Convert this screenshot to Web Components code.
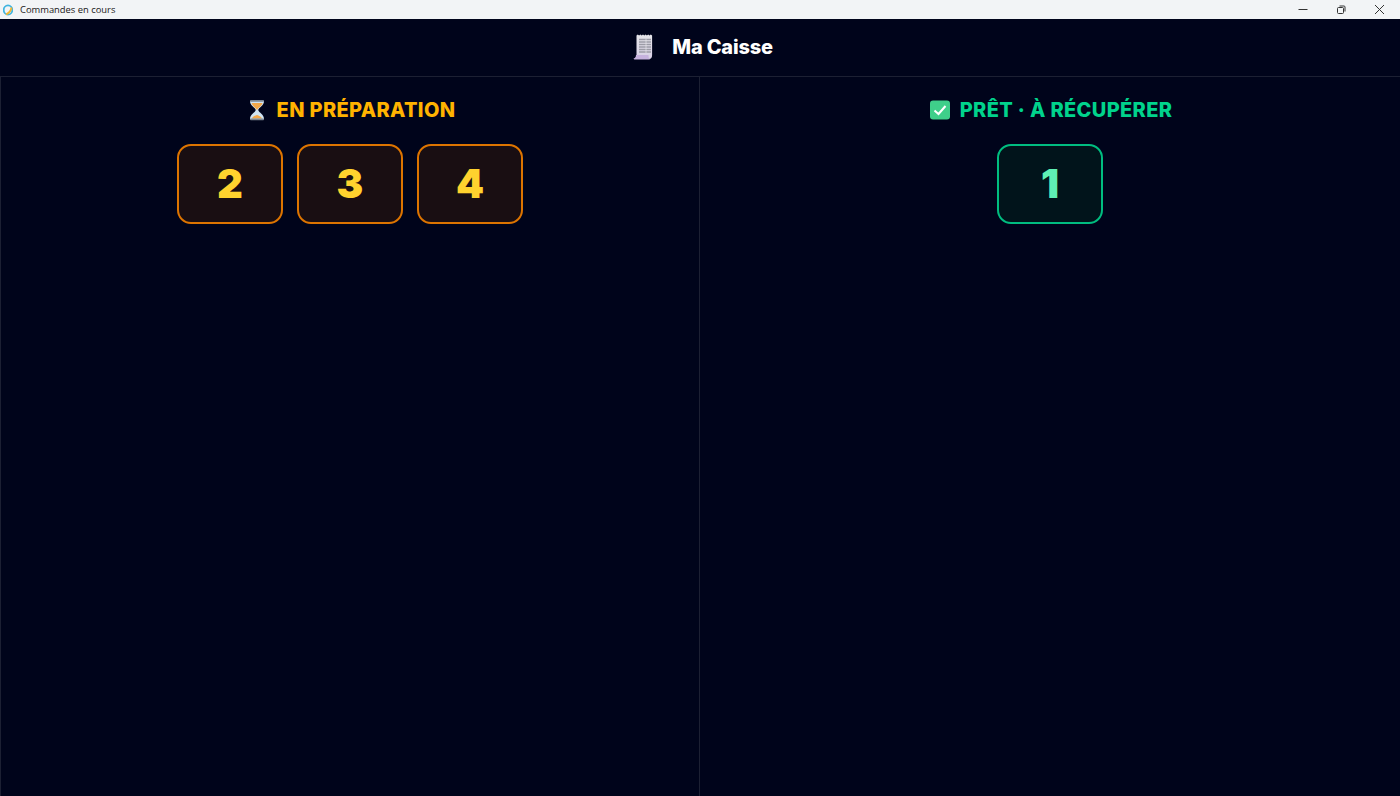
<!doctype html>
<html lang="fr"><head><meta charset="utf-8"><title>Commandes en cours</title>
<style>
html,body{margin:0;height:100%;background:#00041b}
body{width:1400px;height:796px;overflow:hidden;font-family:Inter,"Liberation Sans",sans-serif}
</style></head><body>
<caisse-app></caisse-app>
<script>
class WinBar extends HTMLElement{constructor(){super();this.attachShadow({mode:'open'}).innerHTML=`
<style>:host{display:flex;align-items:center;height:19px;background:#f2f4f6;color:#1a1a1a;font:400 9.4px "Open Sans","Liberation Sans",sans-serif}
.ic{display:flex;margin:0 7px 0 3px}.t{flex:1;white-space:nowrap}.b{display:flex;width:38px;justify-content:center;align-items:center;height:19px}
</style>
<span class="ic"><svg width="10" height="12" viewBox="0 0 10 12"><ellipse cx="5" cy="6" rx="4.300" ry="4.600" fill="none" stroke="#3fb4e0" stroke-width="1.800"/><path d="M3 10.500C6 9 8 7 8.500 3.500" fill="none" stroke="#f2b632" stroke-width="1.800"/></svg></span>
<span class="t">Commandes en cours</span>
<span class="b"><svg width="10" height="10"><path d="M.5 4.500h9" stroke="#333" stroke-width="1"/></svg></span>
<span class="b"><svg width="10" height="10"><rect x="1.500" y="2.500" width="6" height="6" rx="1" fill="none" stroke="#333"/><path d="M3.500 1h4.500a1 1 0 0 1 1 1v4.500" fill="none" stroke="#333"/></svg></span>
<span class="b" style="margin-right:2px"><svg width="11" height="11"><path d="M1 1l9 9M10 1l-9 9" stroke="#333" stroke-width="1"/></svg></span>`}}
customElements.define('win-bar',WinBar);

class AppHeader extends HTMLElement{constructor(){super();this.attachShadow({mode:'open'}).innerHTML=`
<style>:host{display:flex;align-items:center;justify-content:center;gap:17px;height:58px;box-sizing:border-box;border-bottom:1px solid #1c2033;color:#fff;font-weight:800;font-size:20px;letter-spacing:-.2px;padding-left:6px;padding-bottom:1px}
svg{display:block}</style>
<svg width="22" height="26" viewBox="0 0 22 26"><defs><linearGradient id="p" x1="0" y1="0" x2="0" y2="1"><stop offset="0" stop-color="#e6e6ea"/><stop offset="1" stop-color="#d8d0e6"/></linearGradient></defs>
<path d="M3.500 1.500l1.300-1 1.300 1 1.300-1 1.300 1 1.300-1 1.300 1 1.300-1 1.300 1 1.300-1 1.300 1 1.300-1 1.300 1V21c0 2.500-1 4-3 4H1c1.500-.7 2.500-2 2.500-4z" fill="url(#p)"/>
<path d="M.5 24.500c1.500 0 2.500-1.200 2.500-3.500h12.500c0 2 .3 3.500 1.500 4.500H2C1.200 25.500.7 25 .5 24.500z" fill="#c6b2de"/>
<path d="M6 5.500h12M6 8h12M6 10.500h12M6 13h12M6 15.500h12M6 18h12" stroke="#9c9ca6" stroke-width="1.300"/><path d="M13 4.500v14.500" stroke="#e6e6ea" stroke-width=".7"/></svg>
<span>Ma Caisse</span>`}}
customElements.define('app-header',AppHeader);

class OrderBadge extends HTMLElement{constructor(){super();this.attachShadow({mode:'open'}).innerHTML=`
<style>:host{display:flex;align-items:center;justify-content:center;width:106px;height:80px;box-sizing:border-box;border-radius:14px;border:2px solid var(--bd);background:var(--bg);color:var(--fg);font-weight:900;font-size:40px;line-height:1}</style><slot></slot>`}}
customElements.define('order-badge',OrderBadge);

class OrderPanel extends HTMLElement{constructor(){super();this.attachShadow({mode:'open'}).innerHTML=`
<style>:host{display:flex;flex-direction:column;align-items:center;flex:1;padding-top:21px;box-sizing:border-box}
h2{margin:0 0 22px;height:24px;display:flex;align-items:center;gap:8px;font-size:20px;font-weight:800;letter-spacing:.35px;line-height:24px;color:var(--title);white-space:nowrap}
.list{display:flex;gap:14px}::slotted(svg){display:block}</style>
<h2><slot name="icon"></slot><span><slot name="title"></slot></span></h2><div class="list"><slot></slot></div>`}}
customElements.define('order-panel',OrderPanel);

class CaisseApp extends HTMLElement{constructor(){super();this.attachShadow({mode:'open'}).innerHTML=`
<style>:host{display:flex;flex-direction:column;height:796px}
.cols{display:flex;flex:1;box-shadow:inset 1px 0 0 #1c2033}
.l{--title:#ffb300;--bd:#dd7400;--bg:#190e12;--fg:#ffd22e;border-right:1px solid #1c2033;flex:0 0 700px;box-sizing:border-box;padding-left:1px}
.r{--title:#00d38c;--bd:#00bd80;--bg:#01141b;--fg:#5ff0b4}</style>
<win-bar></win-bar><app-header></app-header>
<div class="cols">
<order-panel class="l">
<svg slot="icon" width="24" height="24" viewBox="-2 0 24 24"><path d="M3 3h14c0 5-5 6-5.800 9 .8 3 5.800 4 5.800 9H3c0-5 5-6 5.800-9C8 9 3 8 3 3z" fill="#cfe4f2"/><path d="M4.500 5h11c-1 3.500-4 4.500-5.500 7C8.500 9.500 5.500 8.500 4.500 5zM5 20.500c.5-2 3.500-3 5-3.500 1.500.5 4.500 1.500 5 3.500z" fill="#f2a84a"/><rect x="3" y="2" width="14" height="1.800" rx=".8" fill="#7d8792"/><rect x="3" y="20.500" width="14" height="1.800" rx=".8" fill="#7d8792"/></svg>
<span slot="title">EN PRÉPARATION</span>
<order-badge>2</order-badge><order-badge>3</order-badge><order-badge>4</order-badge>
</order-panel>
<order-panel class="r">
<svg slot="icon" width="24" height="20" viewBox="-2 0 24 20"><rect x="0" y=".5" width="20" height="19" rx="3" fill="#3fcf8a"/><path d="M4.500 10.500l4 3.500 7-8" fill="none" stroke="#fff" stroke-width="2"/></svg>
<span slot="title">PRÊT · À RÉCUPÉRER</span>
<order-badge>1</order-badge>
</order-panel>
</div>`}}
customElements.define('caisse-app',CaisseApp);
</script></body></html>
